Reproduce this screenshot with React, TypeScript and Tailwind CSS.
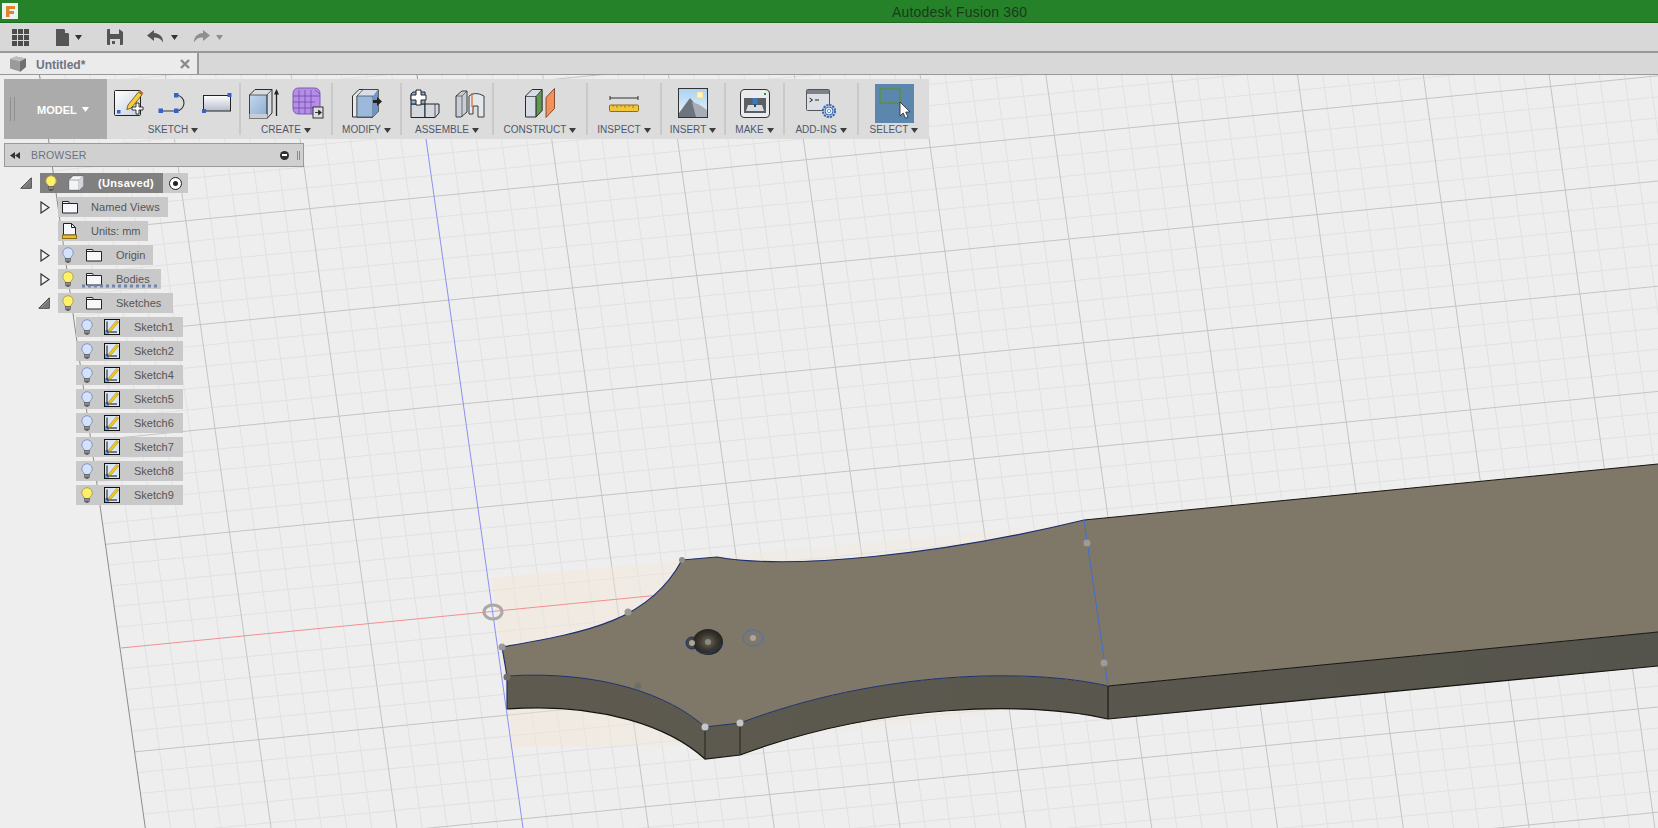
import React from 'react';

const FONT = "font-['Liberation_Sans',Arial,sans-serif]";

const steps = (from: number, to: number) => {
  const out: number[] = [];
  for (let i = from; i <= to; i++) out.push(i);
  return out;
};

// viewport grid, lines are almost parallel so two straight formulas do it
const vx = (i: number, y: number) => 39.5 + 25.16 * i + 0.1405 * (y - 75);
const hy = (i: number, x: number) => 648 - 0.0985 * (x - 121) + 21.04 * i;

const BACK_EDGE = 'M502 647 C590 632 650 620 682 560 L717 557 C790 570 940 555 1084 520';
const FRONT_EDGE = 'M1108 686 C1030 668 880 670 740 723 L705 727 C670 695 600 670 507 676';

function Viewport() {
  const verticals = steps(0, 70);
  const horizontals = steps(-28, 22);
  return (
    <svg className="absolute inset-0 w-full h-full" viewBox="0 75 1658 753">
      <defs>
        <clipPath id="gridClip">
          <polygon points="39.5,75 145.3,828 1658,828 1658,75" />
        </clipPath>
        <radialGradient id="hole" cx="50%" cy="50%" r="55%">
          <stop offset="0%" stopColor="#6e6a5e" />
          <stop offset="55%" stopColor="#3a372f" />
          <stop offset="100%" stopColor="#221f1a" />
        </radialGradient>
        <linearGradient id="sideFace" x1="0" y1="0" x2="1" y2="0">
          <stop offset="0%" stopColor="#5e5a4f" />
          <stop offset="100%" stopColor="#55544c" />
        </linearGradient>
        <linearGradient id="glow" x1="0" y1="0" x2="1" y2="0">
          <stop offset="0%" stopColor="#f3e6d6" stopOpacity=".5" />
          <stop offset="100%" stopColor="#f3e6d6" stopOpacity=".15" />
        </linearGradient>
      </defs>

      <g clipPath="url(#gridClip)">
        {verticals.filter((i) => i % 5 !== 0).map((i) => (
          <line key={i} x1={vx(i, 75)} y1={75} x2={vx(i, 828)} y2={828} stroke="#e1e1e1" strokeWidth={1} />
        ))}
        {horizontals.filter((i) => i % 5 !== 0).map((i) => (
          <line key={i} x1={0} y1={hy(i, 0)} x2={1658} y2={hy(i, 1658)} stroke="#e1e1e1" strokeWidth={1} />
        ))}
        {verticals.filter((i) => i % 5 === 0 && i !== 0 && i !== 15).map((i) => (
          <line key={i} x1={vx(i, 75)} y1={75} x2={vx(i, 828)} y2={828} stroke="#c4c4c4" strokeWidth={1} />
        ))}
        {horizontals.filter((i) => i % 5 === 0 && i !== 0).map((i) => (
          <line key={i} x1={0} y1={hy(i, 0)} x2={1658} y2={hy(i, 1658)} stroke="#c4c4c4" strokeWidth={1} />
        ))}
      </g>

      {/* soft glow round the body */}
      <polygon points="492,578 1000,530 1084,520 1108,700 720,745 513,747" fill="url(#glow)" />

      <line x1={39.5} y1={75} x2={145.3} y2={828} stroke="#8c8c8c" strokeWidth={1} />
      <line x1={121} y1={648} x2={680} y2={593} stroke="#f29090" strokeWidth={1} />
      <line x1={417} y1={75} x2={523} y2={828} stroke="#8c90f0" strokeWidth={1} />
      <ellipse cx={493} cy={612} rx={9} ry={7} fill="none" stroke="#a9a9a9" strokeWidth={3} />

      {/* side faces */}
      <path
        d="M507 676 L507 709 C600 702 670 727 705 759 L740 755 C880 703 1030 701 1108 719 L1658 666 L1658 632 L1108 686 C1030 668 880 670 740 723 L705 727 C670 695 600 670 507 676 Z"
        fill="url(#sideFace)"
      />
      {/* top face */}
      <path
        d="M502 647 C590 632 650 620 682 560 L717 557 C790 570 940 555 1084 520 L1658 464 L1658 632 L1108 686 C1030 668 880 670 740 723 L705 727 C670 695 600 670 507 676 Z"
        fill="#7f7869"
      />

      {/* edges */}
      <path d={BACK_EDGE} fill="none" stroke="#1d2f6e" strokeWidth={1.2} />
      <path d="M1084 520 L1658 464" fill="none" stroke="#15140f" strokeWidth={1} />
      <path d={FRONT_EDGE} fill="none" stroke="#1d2f6e" strokeWidth={1} />
      <path d="M502 647 L507 676 L507 709" fill="none" stroke="#1d2f6e" strokeWidth={1.2} />
      <path d="M1108 686 L1658 632" fill="none" stroke="#15140f" strokeWidth={1} />
      <path d="M507 709 C600 702 670 727 705 759 L740 755 C880 703 1030 701 1108 719 L1658 666" fill="none" stroke="#15140f" strokeWidth={1.2} />
      <line x1={1108} y1={686} x2={1108} y2={719} stroke="#111" strokeWidth={1} />
      <line x1={705} y1={727} x2={705} y2={759} stroke="#222" strokeWidth={1} />
      <line x1={740} y1={723} x2={740} y2={755} stroke="#222" strokeWidth={1} />
      <line x1={1084} y1={520} x2={1108} y2={686} stroke="#3f6fd2" strokeWidth={1} />

      {/* holes */}
      <ellipse cx={692} cy={643} rx={6} ry={6} fill="#4a473e" stroke="#1d2f6e" strokeWidth={1} />
      <ellipse cx={708} cy={642} rx={15} ry={13} fill="url(#hole)" />
      <path d="M696 650 Q707 660 723 644" fill="none" stroke="#1d3c8c" strokeWidth={1} />
      <ellipse cx={753} cy={638} rx={10} ry={8} fill="none" stroke="#4a70b8" strokeWidth={1} />

      {/* sketch points */}
      {[
        [682, 560, '#8f8d86', 3],
        [628, 612, '#9c9a94', 3.5],
        [502, 647, '#9c9a94', 3.5],
        [507, 677, '#6f6d66', 3.5],
        [638, 686, '#6f6d66', 3.5],
        [705, 727, '#c4c6c8', 3.5],
        [740, 723, '#c4c6c8', 3.5],
        [1087, 543, '#9b9b98', 3.5],
        [1104, 663, '#9b9b98', 3.5],
        [692, 643, '#a8a69f', 3],
        [708, 642, '#8d8a80', 3],
        [753, 638, '#a8a69f', 3],
      ].map(([x, y, c, r]) => (
        <circle key={`${x}-${y}`} cx={x as number} cy={y as number} r={r as number} fill={c as string} />
      ))}
    </svg>
  );
}

function Caret({ color = '#444' }: { color?: string }) {
  return (
    <svg width="7" height="5" viewBox="0 0 7 5" className="shrink-0">
      <path d="M0 0h7L3.5 5z" fill={color} />
    </svg>
  );
}

function Bulb({ on }: { on?: boolean }) {
  const fill = on ? '#fdf06a' : '#d5e2fb';
  const rim = on ? '#b8a040' : '#7f95c9';
  return (
    <svg width="12" height="16" viewBox="0 0 12 16" className="shrink-0">
      <path d="M6 .7a5.2 5.2 0 0 0-5.2 5.2c0 2 1.2 3 2.2 4.2.4.6.5 1 .5 1.4h5c0-.4.1-.8.5-1.4 1-1.2 2.2-2.2 2.2-4.2A5.2 5.2 0 0 0 6 .7z" fill={fill} stroke={rim} />
      <rect x="3.5" y="11.5" width="5" height="3" fill="#8a8a8a" stroke="#555" strokeWidth=".6" />
      <rect x="4.5" y="14.4" width="3" height="1.3" fill="#444" />
    </svg>
  );
}

function Folder() {
  return (
    <svg width="16" height="14" viewBox="0 0 16 14" className="shrink-0">
      <path d="M.5 13V1.5h6l1 2h8V13z" fill="#f6f8fb" stroke="#222" />
      <path d="M.5 3.5h7" stroke="#222" />
    </svg>
  );
}

function SketchGlyph() {
  return (
    <svg width="16" height="16" viewBox="0 0 16 16" className="shrink-0">
      <rect x=".5" y=".5" width="15" height="15" fill="#d8e6f6" stroke="#111" />
      <rect x="1" y="11" width="4" height="4" fill="#6aa6e0" />
      <path d="M3 2.5V13h10" fill="none" stroke="#111" />
      <path d="M5 10.5 12.5 1.5l2.2 1.7L7 12l-2.5.7z" fill="#f7c81c" stroke="#9a7a10" strokeWidth=".5" />
    </svg>
  );
}

function UnitsDoc() {
  return (
    <svg width="15" height="16" viewBox="0 0 15 16" className="shrink-0">
      <path d="M1.5 12V.5h8l4 4V12z" fill="#f5f7fa" stroke="#222" />
      <path d="M9.5.5v4h4" fill="none" stroke="#222" />
      <rect x=".5" y="12" width="14" height="3.5" fill="#eebc2d" stroke="#8a6a12" />
    </svg>
  );
}

function Cube() {
  return (
    <svg width="16" height="16" viewBox="0 0 16 16" className="shrink-0">
      <path d="M.7 5 5 .7h10.3V11L11 15.3H.7z" fill="#f2f4f6" stroke="#555" strokeWidth=".7" />
      <path d="M11 15.3V5H.7M11 5l4.3-4.3" fill="none" stroke="#888" strokeWidth=".7" />
      <path d="M11 5l4.3-4.3V11L11 15.3z" fill="#d2d6da" />
    </svg>
  );
}

function Expander({ open }: { open?: boolean }) {
  return open ? (
    <svg width="12" height="12" viewBox="0 0 12 12" className="shrink-0">
      <path d="M.8 11.3 11.3.8v10.5z" fill="#8d8d8d" stroke="#222" strokeWidth=".8" />
      <path d="M4 10.5 10.5 4v6.5z" fill="#777" />
    </svg>
  ) : (
    <svg width="10" height="13" viewBox="0 0 10 13" className="ml-[2px] shrink-0">
      <path d="M1 1l8 5.5L1 12z" fill="#f4f4f4" stroke="#333" strokeWidth="1.2" />
    </svg>
  );
}

/* ---------- ribbon icons ---------- */

function CreateSketchIcon() {
  return (
    <svg width="30" height="30" viewBox="0 0 30 30">
      <defs>
        <linearGradient id="paper" x1="0" y1="0" x2="1" y2="1">
          <stop offset="0" stopColor="#ffffff" />
          <stop offset="1" stopColor="#c4cfde" />
        </linearGradient>
      </defs>
      <rect x=".5" y="2.5" width="26" height="25" rx="1" fill="url(#paper)" stroke="#222" />
      <rect x="3" y="22" width="3.5" height="3.5" fill="#3465c6" />
      <path d="M14 17 24.5 4l3.5 2.8L17.3 20l-4.5 1.6z" fill="#f7ce3c" stroke="#5a4a1c" strokeWidth=".8" />
      <path d="M24.5 4l1.6-1.8 3.4 2.8L28 6.800z" fill="#b06a34" />
      <path d="M18 19h4v-4h3v4h4v3h-4v4h-3v-4h-4z" fill="#fff" stroke="#222" strokeWidth=".9" />
    </svg>
  );
}

function SplineIcon() {
  return (
    <svg width="30" height="21" viewBox="0 0 30 21">
      <path d="M3 18H18A8 8 0 0 0 18 2" fill="none" stroke="#333" strokeWidth="1.1" />
      <rect x="0.500" y="15.500" width="4.500" height="4.500" fill="#3465c6" />
      <rect x="16" y="15.500" width="4.500" height="4.500" fill="#3465c6" />
      <rect x="16" y="0" width="4.500" height="4.500" fill="#3465c6" />
    </svg>
  );
}

function RectIcon() {
  return (
    <svg width="30" height="21" viewBox="0 0 30 21">
      <defs>
        <linearGradient id="rectFill" x1="0" y1="0" x2="0" y2="1">
          <stop offset="0" stopColor="#ffffff" />
          <stop offset="1" stopColor="#b4bccb" />
        </linearGradient>
      </defs>
      <rect x="1.500" y="2.500" width="27" height="15.500" fill="url(#rectFill)" stroke="#222" />
      <rect x="25.500" y="0" width="4" height="4" fill="#3465c6" />
      <rect x="0" y="16" width="4" height="4" fill="#3465c6" />
    </svg>
  );
}

function ExtrudeIcon() {
  return (
    <svg width="30" height="31" viewBox="0 0 30 31">
      <defs>
        <linearGradient id="blueFace" x1="0" y1="0" x2="1" y2="1">
          <stop offset="0" stopColor="#c5d8ee" />
          <stop offset="1" stopColor="#8eaed4" />
        </linearGradient>
      </defs>
      <path d="M.5 7 6 1.500h17V25l-5 5.500H.5z" fill="#d6dbe2" stroke="#2b2b2b" />
      <path d="M.5 7H18v20H.5z" fill="url(#blueFace)" stroke="#2b2b2b" strokeWidth=".7" />
      <path d="M18 7l5-5.500" stroke="#2b2b2b" strokeWidth=".7" />
      <path d="M18 7v23.500" stroke="#2b2b2b" strokeWidth=".7" />
      <rect x=".5" y="26" width="17.500" height="4.500" fill="#c9ced6" />
      <path d="M27.500 28V5" stroke="#222" strokeWidth="1.300" />
      <path d="M27.500 1 25 6.500h5z" fill="#222" />
    </svg>
  );
}

function FormIcon() {
  return (
    <svg width="32" height="32" viewBox="0 0 32 32">
      <path d="M1 7Q1 1 7 1h15q6 0 6 6v14q0 6-6 6H7q-6 0-6-6z" fill="#b68ee8" stroke="#7d5ab4" />
      <path d="M1 9h22M1 15h22M1 21h22M7 3v24M13 3v24M19 3v24M23 3l5 4M23 9l5 0" stroke="#6e4aa8" strokeWidth=".8" fill="none" />
      <rect x="21" y="20" width="10" height="11" fill="#dedede" stroke="#333" />
      <path d="M23 25.500h3.500V23l3 2.500-3 2.500v-2.500H23z" fill="#222" stroke="#222" strokeWidth=".6" />
    </svg>
  );
}

function PressPullIcon() {
  return (
    <svg width="30" height="31" viewBox="0 0 30 31">
      <path d="M.5 29V8L7 1.500h19V24l-5 5z" fill="#e6e9ee" stroke="#2b2b2b" />
      <path d="M5 29V8l6-6.500h15V24l-5 5z" fill="#d9dee6" stroke="#2b2b2b" strokeWidth=".7" />
      <path d="M5 8h16v21H5z" fill="#9cb9dd" stroke="#2b2b2b" strokeWidth=".6" />
      <path d="M21 8l5-6.500V24l-5 5z" fill="#6e95c8" />
      <path d="M21 12h4V9l5 4.500-5 4.500v-3h-4z" fill="#222" />
    </svg>
  );
}

function NewComponentIcon() {
  return (
    <svg width="30" height="30" viewBox="0 0 30 30">
      <path d="M1 16h14v13.500H1z" fill="#d3d8df" stroke="#222" />
      <path d="M15 16h10l4 0v9l-4 4.500H15z" fill="#d3d8df" stroke="#222" />
      <path d="M25 16v13.500" stroke="#222" strokeWidth=".7" />
      <path d="M3 4h12v12H1V6z" fill="#8db0da" stroke="#222" />
      <path d="M1 7h5V2h5v5h5v5h-5v5H6v-5H1z" fill="#fff" stroke="#222" />
    </svg>
  );
}

function JointIcon() {
  return (
    <svg width="30" height="30" viewBox="0 0 30 30">
      <path d="M1 29V8l6-5h5v21l-6 5z" fill="#c9cfd8" stroke="#2b2b2b" strokeWidth=".9" />
      <path d="M1 8h6l5-5" stroke="#2b2b2b" strokeWidth=".6" fill="none" />
      <path d="M7 8v21" stroke="#2b2b2b" strokeWidth=".6" />
      <path d="M14 8q6-5 15 0v21h-6v-11h-5v8h-4z" fill="#e4e7ec" stroke="#2b2b2b" strokeWidth=".9" />
      <path d="M17 5v14" stroke="#e0661f" strokeWidth="1.200" />
    </svg>
  );
}

function ConstructIcon() {
  return (
    <svg width="30" height="30" viewBox="0 0 30 30">
      <path d="M.5 8 7 1.500h10v21L11 29H.5z" fill="#d7dce4" stroke="#2b2b2b" />
      <path d="M11 8.500 17 1.500v21L11 29z" fill="#5d9a4f" stroke="#2b2b2b" strokeWidth=".7" />
      <path d="M.5 8.500H11V29" fill="none" stroke="#2b2b2b" strokeWidth=".7" />
      <path d="M21 9.500 29.500 .5v20L21 29.500z" fill="#f0925a" stroke="#6d3216" strokeWidth=".8" />
    </svg>
  );
}

function InspectIcon() {
  return (
    <svg width="30" height="18" viewBox="0 0 30 18">
      <path d="M1 2v4M29 2v4M1 4h28" stroke="#333" strokeWidth="1" fill="none" />
      <rect x=".5" y="11" width="29" height="6.500" rx="1" fill="#f0c63a" stroke="#8d6f16" />
      <path d="M4 11v2M8 11v3M12 11v2M16 11v3M20 11v2M24 11v3" stroke="#8d6f16" strokeWidth=".8" />
    </svg>
  );
}

function InsertIcon() {
  return (
    <svg width="30" height="30" viewBox="0 0 30 30">
      <defs>
        <linearGradient id="sky" x1="0" y1="0" x2="0" y2="1">
          <stop offset="0" stopColor="#a9d2f2" />
          <stop offset="1" stopColor="#eef4f8" />
        </linearGradient>
      </defs>
      <rect x=".5" y=".5" width="29" height="29" fill="url(#sky)" stroke="#333" />
      <rect x="19" y="4" width="6" height="6" fill="#fff4c2" stroke="#f3d97a" strokeWidth=".8" />
      <path d="M1 25 12 10q3 3 6 8l11 11H1z" fill="#6d747e" />
      <path d="M14 14q6 1 15 8v7H18z" fill="#a7adb6" />
    </svg>
  );
}

function MakeIcon() {
  return (
    <svg width="30" height="29" viewBox="0 0 30 29">
      <path d="M.5 5Q.5 .5 5 .5h20q4.500 0 4.500 4.500v20q0 3.500-3.500 3.500H4q-3.500 0-3.500-3.500z" fill="#e9ebee" stroke="#333" />
      <rect x="4" y="9" width="22" height="15" fill="#5b5e63" />
      <path d="M6 22l2-6h14l2 6z" fill="#d9dce0" />
      <rect x="12.500" y="9" width="5" height="6" fill="#3a78c4" />
      <path d="M14 15h2v3h-2z" fill="#1f4d8c" />
      <rect x="24" y="4" width="2" height="2" fill="#1c9a3a" />
    </svg>
  );
}

function AddInsIcon() {
  return (
    <svg width="30" height="29" viewBox="0 0 30 29">
      <rect x=".5" y=".5" width="23" height="21" rx="1" fill="#dce0e6" stroke="#555" />
      <rect x="1" y="1" width="22" height="4" fill="#7d8188" />
      <path d="M3.500 9l3 2-3 2M9 11h4" fill="none" stroke="#222" strokeWidth="1" />
      <circle cx="23" cy="22" r="6" fill="#d8e4f5" stroke="#3a67ac" strokeWidth="2.200" strokeDasharray="2.200 .9" />
      <circle cx="23" cy="22" r="4" fill="#eaf0f9" stroke="#3a67ac" strokeWidth="1" />
      <circle cx="23" cy="22" r="1.700" fill="#fff" stroke="#3a67ac" strokeWidth=".7" />
    </svg>
  );
}

function SelectIcon() {
  return (
    <svg width="39" height="39" viewBox="0 0 39 39">
      <rect width="39" height="39" fill="#5b87af" />
      <rect x="5" y="5" width="20" height="14" fill="none" stroke="#5f8f3a" strokeWidth="1.400" />
      <path d="M25 18v14l3.200-3 2.300 5.200 2.500-1.100-2.300-5 4.300-.2z" fill="#fff" stroke="#222" strokeWidth=".8" />
    </svg>
  );
}

const sections = [
  { label: 'SKETCH', width: 'w-[132px]', icons: [<CreateSketchIcon key="a" />, <SplineIcon key="b" />, <RectIcon key="c" />], gap: 'gap-[14px]' },
  { label: 'CREATE', width: 'w-[90px]', icons: [<ExtrudeIcon key="a" />, <FormIcon key="b" />], gap: 'gap-[13px]' },
  { label: 'MODIFY', width: 'w-[67px]', icons: [<PressPullIcon key="a" />], gap: 'gap-0' },
  { label: 'ASSEMBLE', width: 'w-[90px]', icons: [<NewComponentIcon key="a" />, <JointIcon key="b" />], gap: 'gap-[15px]' },
  { label: 'CONSTRUCT', width: 'w-[92px]', icons: [<ConstructIcon key="a" />], gap: 'gap-0' },
  { label: 'INSPECT', width: 'w-[72px]', icons: [<InspectIcon key="a" />], gap: 'gap-0' },
  { label: 'INSERT', width: 'w-[62px]', icons: [<InsertIcon key="a" />], gap: 'gap-0' },
  { label: 'MAKE', width: 'w-[57px]', icons: [<MakeIcon key="a" />], gap: 'gap-0' },
  { label: 'ADD-INS', width: 'w-[72px]', icons: [<AddInsIcon key="a" />], gap: 'gap-0' },
  { label: 'SELECT', width: 'w-[70px]', icons: [<SelectIcon key="a" />], gap: 'gap-0' },
];

function Toolbar() {
  return (
    <div className="flex h-[60px] w-[925px] bg-[#dcdcdc]">
      <div className="flex w-[103px] items-center bg-[#ababab] pl-[6px]">
        <div className="h-[24px] w-[5px] border-x border-[#8f8f8f]" />
        <span className="ml-[22px] mt-[2px] text-[11px] font-bold text-white">MODEL</span>
        <span className="ml-[5px]"><Caret color="#ffffff" /></span>
      </div>
      {sections.map((s, i) => (
        <React.Fragment key={s.label}>
          {i > 0 && <div className="my-[4px] w-[2px] bg-[#c9c9c9]" />}
          <div className={`flex flex-col items-center ${s.width}`}>
            <div className={`mt-[4px] flex h-[40px] items-center ${s.gap}`}>{s.icons}</div>
            <div className="mt-[1px] flex items-center gap-[3px] text-[10px] leading-[12px] text-[#4f566b]">
              <span>{s.label}</span>
              <Caret color="#3d3d3d" />
            </div>
          </div>
        </React.Fragment>
      ))}
    </div>
  );
}

function BrowserHeader() {
  return (
    <div className="mt-[4px] flex h-[24px] w-[300px] items-center border border-[#9a9a9a] bg-[#d0d0d0] pl-[5px]">
      <svg width="10" height="7" viewBox="0 0 10 7" className="shrink-0">
        <path d="M5 0v7L0 3.500zM10 0v7L5 3.500z" fill="#333" />
      </svg>
      <span className="ml-[11px] mt-[2px] text-[10.500px] tracking-[.2px] text-[#6b7080]">BROWSER</span>
      <div className="ml-auto mr-[3px] flex items-center gap-[8px]">
        <div className="flex h-[9px] w-[9px] items-center justify-center rounded-full bg-[#2f2f2f]">
          <div className="h-[1.500px] w-[5px] bg-white" />
        </div>
        <div className="h-[9px] w-[3px] border-x border-[#8a8a8a]" />
      </div>
    </div>
  );
}

function Chip({ width, children, className = '' }: { width: string; children: React.ReactNode; className?: string }) {
  return <div className={`relative flex h-[20px] items-center bg-[#c9c9c9] pl-[4px] text-[11px] text-[#555] ${width} ${className}`}>{children}</div>;
}

function TreeRow({ indent, expander, children }: { indent: string; expander?: 'open' | 'closed' | 'none'; children: React.ReactNode }) {
  return (
    <div className={`mb-[4px] flex items-center ${indent}`}>
      {expander && (
        <div className="flex w-[20px] shrink-0 items-center">
          {expander !== 'none' && <Expander open={expander === 'open'} />}
        </div>
      )}
      {children}
    </div>
  );
}

const sketches = [
  { name: 'Sketch1' },
  { name: 'Sketch2' },
  { name: 'Sketch4' },
  { name: 'Sketch5' },
  { name: 'Sketch6' },
  { name: 'Sketch7' },
  { name: 'Sketch8' },
  { name: 'Sketch9', on: true },
];

function Tree() {
  return (
    <div className="mt-[6px]">
      <TreeRow indent="ml-[16px]" expander="open">
        <div className="flex h-[20px] w-[123px] items-center bg-[#808080] pl-[5px]">
          <div className="w-[23px]"><Bulb on /></div>
          <div className="w-[30px]"><Cube /></div>
          <span className="text-[11px] font-bold tracking-[.3px] text-white">(Unsaved)</span>
        </div>
        <div className="flex h-[20px] w-[25px] items-center justify-center bg-[#c9c9c9]">
          <div className="flex h-[13px] w-[13px] items-center justify-center rounded-full border border-[#222] bg-white">
            <div className="h-[5px] w-[5px] rounded-full bg-[#222]" />
          </div>
        </div>
      </TreeRow>
      <TreeRow indent="ml-[34px]" expander="closed">
        <Chip width="w-[110px]">
          <div className="w-[29px]"><Folder /></div>
          <span className="tracking-[.1px]">Named Views</span>
        </Chip>
      </TreeRow>
      <TreeRow indent="ml-[34px]" expander="none">
        <Chip width="w-[90px]">
          <div className="w-[29px]"><UnitsDoc /></div>
          <span>Units: mm</span>
        </Chip>
      </TreeRow>
      <TreeRow indent="ml-[34px]" expander="closed">
        <Chip width="w-[95px]">
          <div className="w-[24px]"><Bulb /></div>
          <div className="w-[30px]"><Folder /></div>
          <span>Origin</span>
        </Chip>
      </TreeRow>
      <TreeRow indent="ml-[34px]" expander="closed">
        <Chip width="w-[103px]">
          <div className="w-[24px]"><Bulb on /></div>
          <div className="w-[30px]"><Folder /></div>
          <span>Bodies</span>
          <svg width="78" height="4" viewBox="0 0 78 4" className="absolute bottom-[1px] left-[24px]">
            <line x1="0" y1="2" x2="78" y2="2" stroke="#6f86ad" strokeWidth="3" strokeDasharray="3 3" />
          </svg>
        </Chip>
      </TreeRow>
      <TreeRow indent="ml-[34px]" expander="open">
        <Chip width="w-[115px]">
          <div className="w-[24px]"><Bulb on /></div>
          <div className="w-[30px]"><Folder /></div>
          <span>Sketches</span>
        </Chip>
      </TreeRow>
      {sketches.map((s) => (
        <TreeRow key={s.name} indent="ml-[72px]">
          <Chip width="w-[107px]" className="pl-[5px]">
            <div className="w-[23px]"><Bulb on={s.on} /></div>
            <div className="w-[30px]"><SketchGlyph /></div>
            <span>{s.name}</span>
          </Chip>
        </TreeRow>
      ))}
    </div>
  );
}

function QuickBar() {
  return (
    <div className="flex h-[30px] shrink-0 items-center border-b-2 border-[#999] bg-[#d8d8d8] pl-[12px]">
      <svg width="17" height="17" viewBox="0 0 17 17" className="shrink-0">
        <path d="M0 0h5v5H0zM6 0h5v5H6zM12 0h5v5h-5zM0 6h5v5H0zM6 6h5v5H6zM12 6h5v5h-5zM0 12h5v5H0zM6 12h5v5H6zM12 12h5v5h-5z" fill="#4c4c4c" />
      </svg>
      <svg width="14" height="17" viewBox="0 0 14 17" className="ml-[27px] shrink-0">
        <path d="M0 0h8l5 5v12H0z" fill="#555" />
        <path d="M9 .500 12.500 4H9z" fill="#d8d8d8" />
      </svg>
      <span className="ml-[5px]"><Caret color="#333" /></span>
      <svg width="16" height="16" viewBox="0 0 16 16" className="ml-[25px] shrink-0">
        <path d="M0 1a1 1 0 0 1 1-1h11l4 3v12a1 1 0 0 1-1 1H1a1 1 0 0 1-1-1z" fill="#555" />
        <rect x="3" y="0" width="9" height="5" fill="#d8d8d8" />
        <rect x="3" y="10" width="10" height="6" fill="#d8d8d8" />
        <rect x="5" y="12" width="3" height="3" fill="#555" />
      </svg>
      <svg width="18" height="14" viewBox="0 0 18 14" className="ml-[24px] shrink-0">
        <path d="M7 0 0 5.500 7 11V7.500c4 0 7 1 9 5 .5-5-3-9-9-9.500z" fill="#555" />
      </svg>
      <span className="ml-[6px]"><Caret color="#333" /></span>
      <svg width="17" height="14" viewBox="0 0 17 14" className="ml-[15px] shrink-0">
        <path d="M10 0l7 5.500L10 11V7.500c-4 0-7 1-9 5-.5-5 3-9 9-9.500z" fill="#8f8f8f" />
      </svg>
      <span className="ml-[6px]"><Caret color="#8f8f8f" /></span>
    </div>
  );
}

function TabBar() {
  return (
    <div className="flex h-[22px] shrink-0 border-b border-[#999] bg-[#d8d8d8]">
      <div className="flex w-[199px] items-center border-r-2 border-[#999] bg-[#ebebeb] pl-[10px]">
        <svg width="16" height="16" viewBox="0 0 16 16" className="shrink-0">
          <path d="M0 3l6-2.500 10 2v8l-6 5-10-3z" fill="#9a9a9a" />
          <path d="M0 3l10 2.500 6-3L6 .500z" fill="#bdbdbd" />
          <path d="M10 5.500v10.500l6-5v-8.500z" fill="#6f6f6f" />
        </svg>
        <span className="ml-[10px] mt-[2px] text-[12px] font-bold text-[#6e7484]">Untitled*</span>
        <svg width="10" height="10" viewBox="0 0 10 10" className="ml-auto mr-[7px]">
          <path d="M1 1l8 8M9 1l-8 8" stroke="#8a8a8a" strokeWidth="2.400" />
        </svg>
      </div>
    </div>
  );
}

export default function App() {
  return (
    <div className={`flex h-[828px] w-[1658px] flex-col overflow-hidden bg-[#eeeeee] ${FONT}`}>
      <div className="flex h-[23px] shrink-0 items-center border-b border-[#1c6b1f] bg-[#268228]">
        <svg width="16" height="16" viewBox="0 0 16 16" className="ml-[2px] shrink-0">
          <rect width="16" height="16" fill="#e9f3f2" />
          <path d="M4 3h9v3H7.500v2H12v3H7.500v3H4z" fill="#e2822a" />
        </svg>
        <span className="ml-[874px] mt-[2px] text-[14px] tracking-[.2px] text-[#1b3a1c]">Autodesk Fusion 360</span>
      </div>
      <QuickBar />
      <TabBar />
      <div className="relative flex-1">
        <Viewport />
        <div className="absolute left-[4px] top-[4px] flex flex-col">
          <Toolbar />
          <BrowserHeader />
          <Tree />
        </div>
      </div>
    </div>
  );
}
